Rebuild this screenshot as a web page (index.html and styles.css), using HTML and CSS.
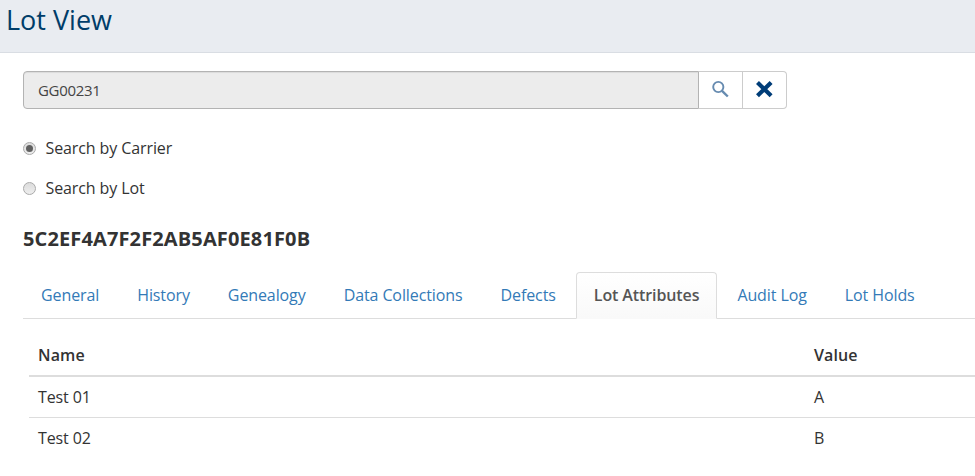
FILE: index.html
```html
<!DOCTYPE html>
<html lang="en">
<head>
<meta charset="utf-8">
<title>Lot View</title>
<link rel="stylesheet" href="styles.css">
</head>
<body>
<header class="page-header"><h1>Lot View</h1></header>
<main>
  <div class="search">
    <div class="search-value">GG00231</div>
    <button class="btn btn-search" aria-label="Search"><svg width="18" height="18" viewBox="0 0 18 18"><circle cx="7.3" cy="7" r="5.1" fill="none" stroke="#668bb0" stroke-width="1.9"/><path d="M11 10.8L16.8 16.5" stroke="#668bb0" stroke-width="2.4"/></svg></button>
    <button class="btn btn-clear" aria-label="Clear"><svg width="18" height="18" viewBox="0 0 18 18"><path d="M4 4L14.6 14.2M14.6 4L4 14.2" stroke="#003d78" stroke-width="4.2" stroke-linecap="square"/></svg></button>
  </div>
  <div class="radio"><span class="dot checked"></span><span>Search by Carrier</span></div>
  <div class="radio"><span class="dot"></span><span>Search by Lot</span></div>
  <h2>5C2EF4A7F2F2AB5AF0E81F0B</h2>
  <nav class="tabs">
    <a>General</a><a>History</a><a>Genealogy</a><a>Data Collections</a><a>Defects</a><a class="active">Lot Attributes</a><a>Audit Log</a><a>Lot Holds</a>
  </nav>
  <table>
    <thead><tr><th class="name">Name</th><th>Value</th></tr></thead>
    <tbody><tr><td>Test 01</td><td>A</td></tr><tr><td>Test 02</td><td>B</td></tr></tbody>
  </table>
</main>
</body>
</html>
```
FILE: styles.css
```css
* { box-sizing: border-box; }
body { margin: 0; height: 476px; overflow: hidden; background: #fff; color: #333; font: 16px/24px "Open Sans", sans-serif; letter-spacing: -0.1px; }
.page-header { height: 53px; background: #e9ecf1; border-bottom: 1px solid #d9dde3; padding: 3px 6px; }
h1 { margin: 0; font-size: 27px; line-height: 34px; font-weight: 400; letter-spacing: 0; color: #003d69; }
main { padding: 18px 0 0 23px; }
.search { display: flex; width: 764px; height: 38px; }
.search-value { flex: 1; border: 1px solid #b3b3b3; border-radius: 4px 0 0 4px; background: #ececec; box-shadow: inset 0 1px 1px rgba(0, 0, 0, .075); padding: 6px 14px; font-size: 15px; letter-spacing: -0.3px; color: #444; }
.btn { width: 44px; padding: 0 1px 2px 0; background: #fff; border: 1px solid #ccc; border-left: 0; display: flex; align-items: center; justify-content: center; }
.btn-clear { border-radius: 0 4px 4px 0; }
.radio { display: flex; align-items: center; gap: 9.5px; height: 24px; margin-top: 16px; }
.search + .radio { margin-top: 27px; }
.dot { width: 13px; height: 13px; border: 1px solid #aaa; border-radius: 50%; background: linear-gradient(#dcdcdc, #eee); display: flex; align-items: center; justify-content: center; }
.checked::after { content: ""; width: 7px; height: 7px; border-radius: 50%; background: #606060; }
h2 { margin: 25px 0 0; font-size: 20px; line-height: 28px; font-weight: 700; letter-spacing: 0.13px; }
.tabs { display: flex; height: 47px; margin-top: 19px; border-bottom: 1px solid #ddd; }
.tabs a { height: 47px; margin-right: 2px; padding: 10px 17px; border: 1px solid transparent; color: #337ab7; white-space: nowrap; }
.tabs .active { color: #555; background: linear-gradient(#fff, #f9f9f9); font-weight: 600; border-color: #ddd #ddd #f9f9f9; border-radius: 4px 4px 0 0; }
table { width: calc(100% - 6px); margin: 16px 0 0 6px; border-collapse: collapse; table-layout: fixed; }
th, td { text-align: left; padding: 8px 9px; height: 41px; border-bottom: 1px solid #ddd; }
th { border-bottom: 2px solid #ddd; font-weight: 600; letter-spacing: 0.1px; }
tbody tr:last-child td { border-bottom: 0; }
.name { width: 776px; }
```
